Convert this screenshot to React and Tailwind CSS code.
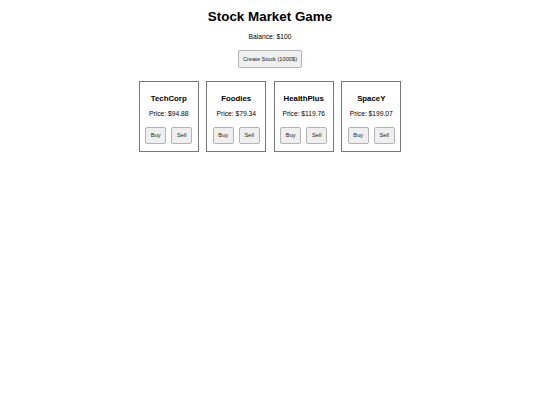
const stocks = [
  { name: "TechCorp", price: 94.88 },
  { name: "Foodies", price: 79.34 },
  { name: "HealthPlus", price: 119.76 },
  { name: "SpaceY", price: 199.07 },
];

function SmallButton({ children }) {
  return (
    <button className="w-[21px] h-[17px] bg-[#efefef] border border-[#b3b3b3] rounded-[2px] text-[5.7px] text-[#222] flex items-center justify-center">
      {children}
    </button>
  );
}

export default function App() {
  return (
    <div
      className="w-[540px] h-[405px] bg-white text-black flex flex-col items-center"
      style={{ fontFamily: '"Liberation Sans", Arial, sans-serif' }}
    >
      <h1 className="mt-[9px] text-[13.4px] leading-[16px] font-bold">Stock Market Game</h1>
      <p className="mt-[8px] text-[6.7px] leading-[8px]">Balance: $100</p>
      <button className="mt-[9px] h-[18px] px-[4px] bg-[#efefef] border border-[#b3b3b3] rounded-[2px] text-[5.7px] text-[#222]">
        Create Stock (1000$)
      </button>
      <div className="mt-[13px] flex gap-[7.5px]">
        {stocks.map((s) => (
          <div
            key={s.name}
            className="w-[60px] border border-[#777] pt-[12px] pb-[7px] flex flex-col items-center"
          >
            <h3 className="text-[7.8px] leading-[10px] font-bold">{s.name}</h3>
            <p className="mt-[6px] text-[6.7px] leading-[8px]">Price: ${s.price.toFixed(2)}</p>
            <div className="mt-[9px] flex gap-[5px]">
              <SmallButton>Buy</SmallButton>
              <SmallButton>Sell</SmallButton>
            </div>
          </div>
        ))}
      </div>
    </div>
  );
}
